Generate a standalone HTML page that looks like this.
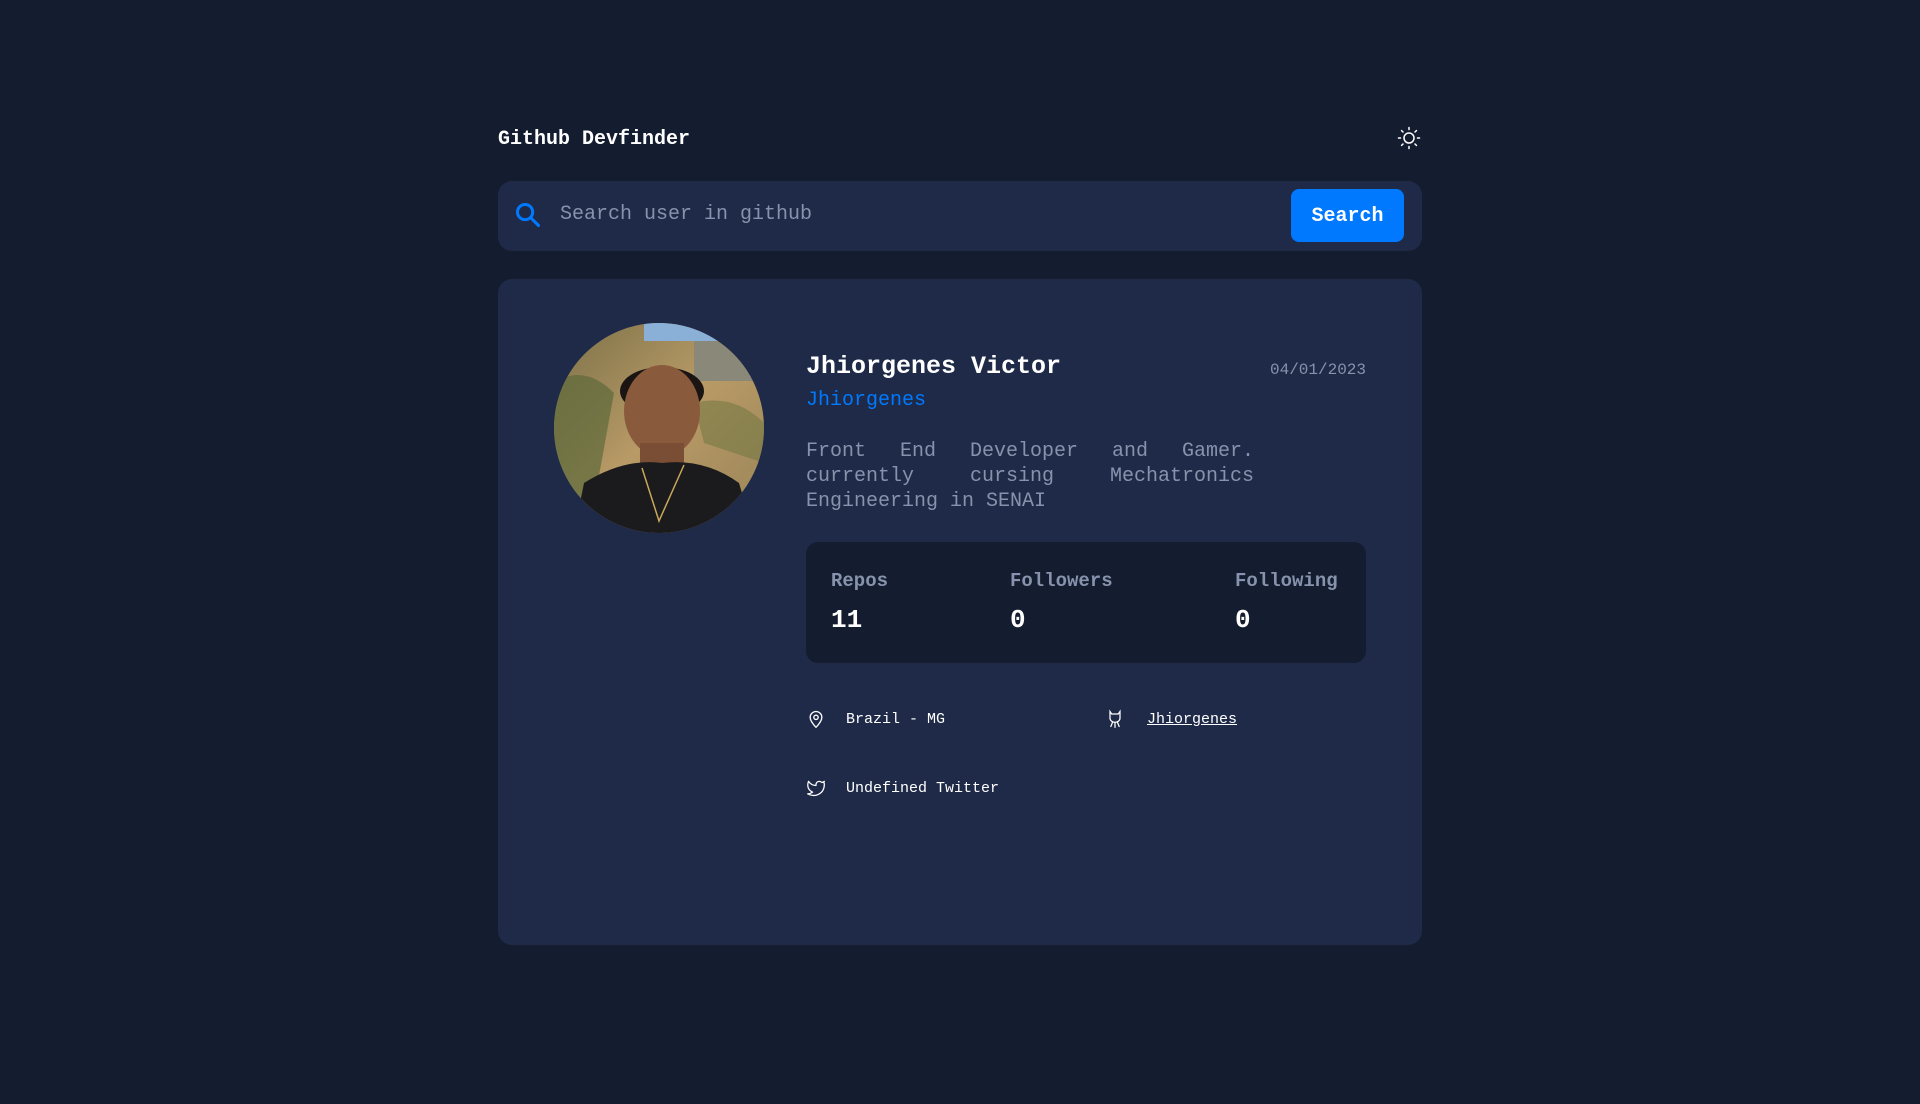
<!DOCTYPE html>
<html><head><meta charset="utf-8"><style>
*{margin:0;padding:0;box-sizing:border-box}
body{width:1920px;height:1104px;background:#141d2f;font-family:"Liberation Mono",monospace;color:#fff;position:relative;overflow:hidden}
.abs{position:absolute}
.title{left:498px;top:127px;font-size:20px;font-weight:bold;line-height:26px}
.search{left:498px;top:181px;width:924px;height:70px;background:#1e2a47;border-radius:14px}
.ph{left:560px;top:202px;font-size:20px;color:#8793ad;line-height:26px}
.btn{left:1291px;top:189px;width:113px;height:53px;background:#0079ff;border-radius:8px;font-size:20px;font-weight:bold;text-align:center;line-height:55px}
.card{left:498px;top:279px;width:924px;height:666px;background:#1e2a47;border-radius:14px}
.name{left:806px;top:351px;font-size:25px;font-weight:bold;line-height:32px}
.date{left:1200px;width:166px;text-align:right;top:360px;font-size:16px;color:#8793ad;line-height:20px}
.login{left:806px;top:389px;font-size:20px;color:#0079ff;line-height:24px}
.bio{left:806px;top:439px;width:448px;font-size:20px;color:#8793ad;line-height:25px;text-align:justify}
.stats{left:806px;top:542px;width:560px;height:121px;background:#141c2f;border-radius:12px}
.lab{font-size:19px;font-weight:bold;color:#8793ad;top:570px;line-height:22px}
.val{font-size:26px;font-weight:bold;top:605px;line-height:30px}
.lk{font-size:15px;line-height:20px;color:#fff}
</style></head><body>
<div class="abs title">Github Devfinder</div>
<svg class="abs" style="left:1397px;top:126px" width="24" height="24" viewBox="0 0 24 24" fill="none" stroke="#fff" stroke-width="1.5" stroke-linecap="round"><circle cx="12" cy="12" r="5"/><path d="M12 1.5v2M12 20.5v2M1.5 12h2M20.5 12h2M4.6 4.6l1.4 1.4M18 18l1.4 1.4M4.6 19.4L6 18M18 6l1.4-1.4"/></svg>
<div class="abs search"></div>
<svg class="abs" style="left:514px;top:201px" width="28" height="28" viewBox="0 0 24 24" fill="none" stroke="#0079ff" stroke-width="2.6" stroke-linecap="round"><circle cx="9.5" cy="9.5" r="6.5"/><path d="M14.5 14.5L21 21"/></svg>
<div class="abs ph">Search user in github</div>
<div class="abs btn">Search</div>
<div class="abs card"></div>
<svg class="abs" style="left:554px;top:323px" width="210" height="210" viewBox="0 0 210 210">
<defs><clipPath id="c"><circle cx="105" cy="105" r="105"/></clipPath>
<linearGradient id="bg" x1="0" y1="0" x2="1" y2="1"><stop offset="0" stop-color="#7a7048"/><stop offset=".5" stop-color="#b89a66"/><stop offset="1" stop-color="#9a8458"/></linearGradient></defs>
<g clip-path="url(#c)">
<rect width="210" height="210" fill="url(#bg)"/>
<rect x="90" y="0" width="100" height="18" fill="#8ab0d8"/>
<rect x="140" y="18" width="70" height="40" fill="#8a8878"/>
<path d="M0 60 Q30 40 60 70 L40 180 L0 190Z" fill="#5e6a3a" opacity=".7"/>
<path d="M140 80 Q180 70 210 100 L210 140 L150 120Z" fill="#6a743e" opacity=".5"/>
<ellipse cx="108" cy="68" rx="42" ry="24" fill="#1a1512"/>
<ellipse cx="108" cy="88" rx="38" ry="46" fill="#8a5a3c"/>
<rect x="86" y="120" width="44" height="40" fill="#7a4e34"/>
<path d="M20 210 L30 160 Q70 135 108 140 Q150 135 185 160 L200 210Z" fill="#1b1b1d"/>
<path d="M88 145 L105 198 L130 142" fill="none" stroke="#c9a85a" stroke-width="1.5"/>
</g></svg>
<div class="abs name">Jhiorgenes Victor</div>
<div class="abs date">04/01/2023</div>
<div class="abs login">Jhiorgenes</div>
<div class="abs bio" style="text-align-last:justify;height:50px;overflow:hidden">Front End Developer and Gamer. currently cursing Mechatronics</div>
<div class="abs bio" style="top:489px">Engineering in SENAI</div>
<div class="abs stats"></div>
<div class="abs lab" style="left:831px">Repos</div>
<div class="abs lab" style="left:1010px">Followers</div>
<div class="abs lab" style="left:1235px">Following</div>
<div class="abs val" style="left:831px">11</div>
<div class="abs val" style="left:1010px">0</div>
<div class="abs val" style="left:1235px">0</div>
<svg class="abs" style="left:806px;top:709px" width="20" height="20" viewBox="0 0 24 24" fill="none" stroke="#fff" stroke-width="1.6"><path d="M12 22s-7-7-7-12a7 7 0 0114 0c0 5-7 12-7 12z"/><circle cx="12" cy="10" r="2.6"/></svg>
<div class="abs lk" style="left:846px;top:710px">Brazil - MG</div>
<svg class="abs" style="left:1105px;top:709px" width="20" height="20" viewBox="0 0 24 24" fill="none" stroke="#fff" stroke-width="1.5" stroke-linecap="round"><path d="M6 3l2 3h8l2-3v8a6 5 0 01-12 0z"/><path d="M9 16l-2 5M12 16v6M15 16l2 5"/></svg>
<div class="abs lk" style="left:1147px;top:710px;text-decoration:underline">Jhiorgenes</div>
<svg class="abs" style="left:806px;top:778px" width="20" height="20" viewBox="0 0 24 24" fill="none" stroke="#fff" stroke-width="1.5" stroke-linejoin="round"><path d="M22 4s-1.5 1-3 1.4A4 4 0 0012 8v1C8 9 5 7 3 4c0 0-4 9 5 13-2 1.4-4 2-6 2 9 5 20 0 20-11.5 0-.3 0-.6-.1-.8C21 5.7 22 4 22 4z"/></svg>
<div class="abs lk" style="left:846px;top:779px">Undefined Twitter</div>
</body></html>
